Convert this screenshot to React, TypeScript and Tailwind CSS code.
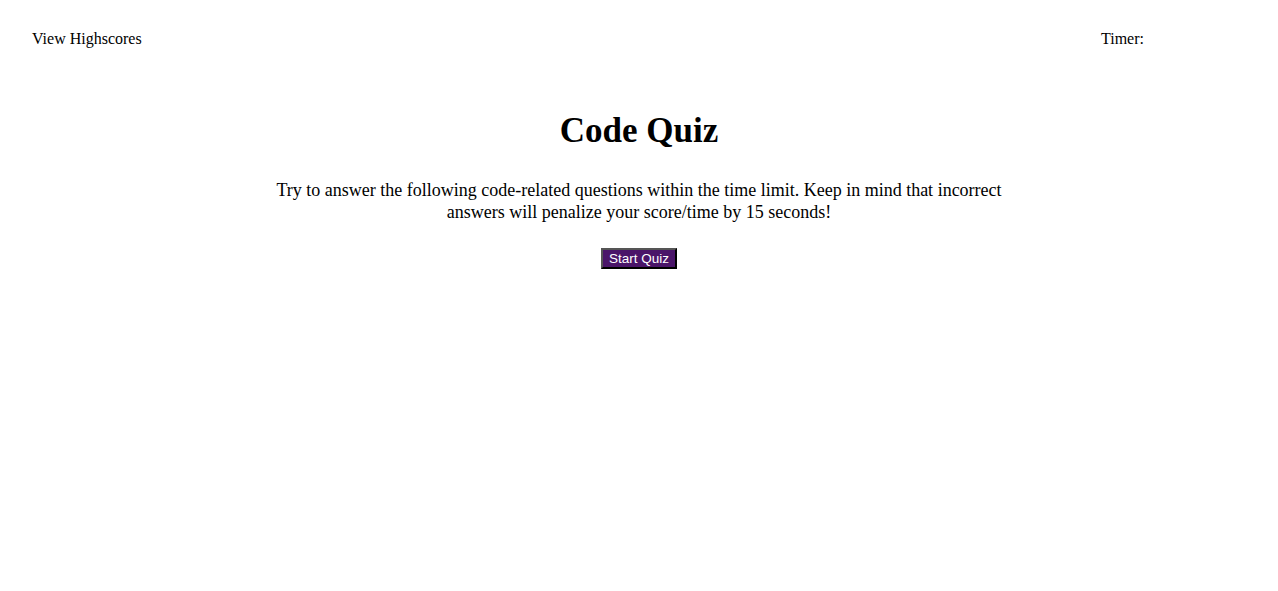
export default function App() {
  return (
    <div className="min-h-screen bg-white text-black" style={{ fontFamily: '"Liberation Serif", "Times New Roman", serif' }}>
      <header className="flex justify-between px-8 pt-[30px] text-base leading-[18px]">
        <div>View Highscores</div>
        <div className="w-[145px]">Timer: <span></span></div>
      </header>
      <main className="flex flex-col items-center">
        <h1 className="mt-[63px] text-[35px] font-bold leading-[40px]">Code Quiz</h1>
        <p className="mt-[28px] max-w-[740px] text-center text-[18px] leading-[22px]">
          Try to answer the following code-related questions within the time limit. Keep in mind that incorrect answers will penalize your score/time by 15 seconds!
        </p>
        <button
          className="mt-[25px] h-[21px] border-2 bg-[#4a1569] px-[6px] text-[13.5px] leading-[15px] text-white"
          style={{ fontFamily: '"Liberation Sans", Arial, sans-serif', borderStyle: 'outset', borderColor: '#555' }}
        >
          Start Quiz
        </button>
      </main>
    </div>
  );
}
